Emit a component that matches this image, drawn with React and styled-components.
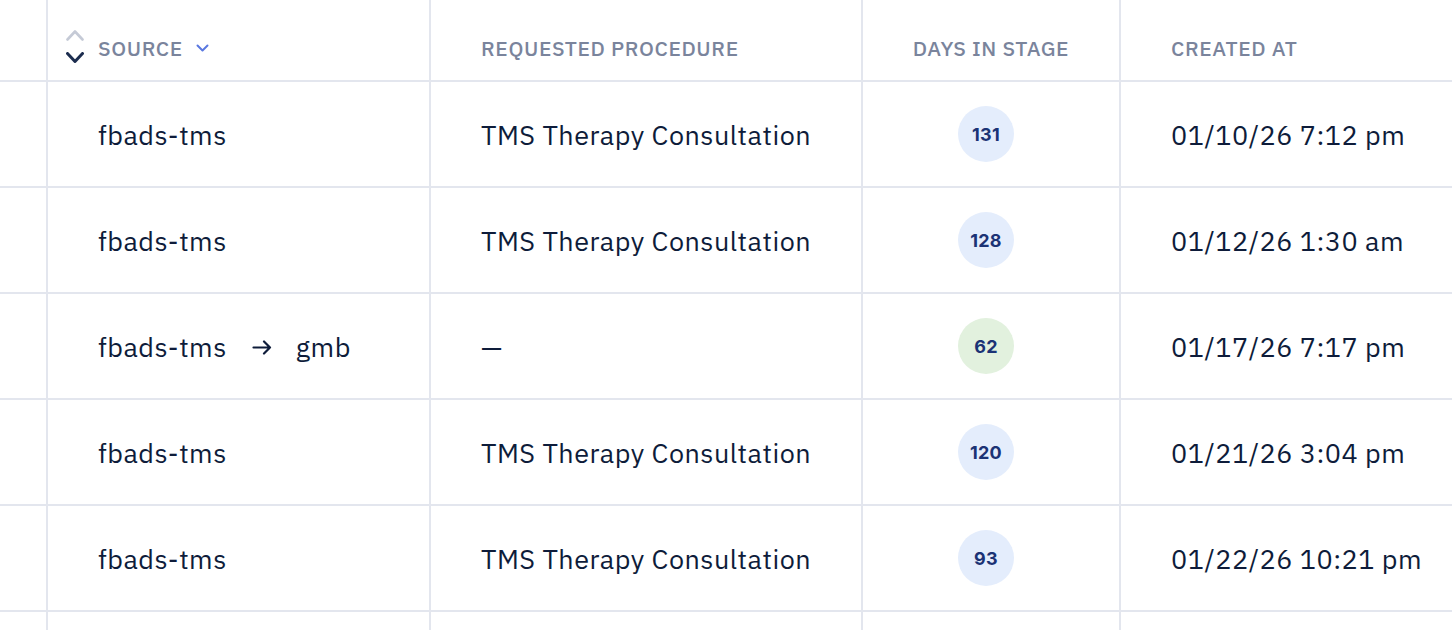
import React from "react";
import styled, { createGlobalStyle } from "styled-components";

const Global = createGlobalStyle`
  html, body { margin: 0; padding: 0; background: #ffffff; }
  body { font-family: "IBM Plex Sans", "Open Sans", "Noto Sans", sans-serif; overflow: hidden; }
`;

const LINE = "#e3e6ee";

const Table = styled.div`
  display: grid;
  grid-template-columns: 48px 383px 432px 258px 1fr;
  width: 1452px;
`;

const HeadCell = styled.div`
  box-sizing: border-box;
  min-width: 0;
  height: 82px;
  display: flex;
  align-items: center;
  justify-content: ${(p) => (p.$center ? "center" : "flex-start")};
  padding: 16px 0 0 ${(p) => (p.$center || p.$blank ? "0" : "50px")};
  border-right: ${(p) => (p.$last ? "none" : `2px solid ${LINE}`)};
  border-bottom: 2px solid ${LINE};
  font-size: 21px;
  font-weight: 500;
  letter-spacing: 0.6px;
  color: #7a849c;
  text-transform: uppercase;
  white-space: nowrap;
`;

const SortHead = styled(HeadCell)`
  padding-left: 18px;
`;

const SortLabel = styled.span`
  margin: 0 13px 0 14px;
`;

const Cell = styled.div`
  box-sizing: border-box;
  min-width: 0;
  height: ${(p) => (p.$partial ? "40px" : "106px")};
  display: flex;
  align-items: center;
  justify-content: ${(p) => (p.$center ? "center" : "flex-start")};
  padding-left: ${(p) => (p.$center || p.$blank ? "0" : "50px")};
  border-right: ${(p) => (p.$last ? "none" : `2px solid ${LINE}`)};
  border-bottom: 2px solid ${LINE};
  font-size: 27px;
  letter-spacing: 0.5px;
  color: #0e1c3a;
  white-space: nowrap;
`;

const SortIcons = styled.span`
  display: flex;
  flex-direction: column;
  align-items: center;
  gap: 11px;
  margin-top: -4px;
`;

const Arrow = styled.span`
  display: inline-flex;
  margin: 2px 24px 0 25px;
`;

const Badge = styled.span`
  width: 56px;
  height: 56px;
  border-radius: 50%;
  background: ${(p) => (p.$green ? "#e2f1de" : "#e4edfc")};
  color: #1b3375;
  font-size: 18px;
  font-weight: 700;
  display: flex;
  align-items: center;
  justify-content: center;
  margin-right: 10px;
  font-family: "Inter", "Noto Sans", sans-serif;
  letter-spacing: 0.3px;
`;

const Chevron = ({ up, color, width = 18, height = 10, w = 2.4 }) => (
  <svg width={width} height={height} viewBox={`0 0 ${width} ${height}`} fill="none">
    <path
      d={
        up
          ? `M1.5 ${height - 1.5} L${width / 2} 1.5 L${width - 1.5} ${height - 1.5}`
          : `M1.5 1.5 L${width / 2} ${height - 1.5} L${width - 1.5} 1.5`
      }
      stroke={color}
      strokeWidth={w}
      strokeLinecap="round"
      strokeLinejoin="round"
    />
  </svg>
);

const rows = [
  { src: "fbads-tms", proc: "TMS Therapy Consultation", days: 131, date: "01/10/26 7:12 pm" },
  { src: "fbads-tms", proc: "TMS Therapy Consultation", days: 128, date: "01/12/26 1:30 am" },
  { src: "fbads-tms", to: "gmb", proc: "—", days: 62, green: true, date: "01/17/26 7:17 pm" },
  { src: "fbads-tms", proc: "TMS Therapy Consultation", days: 120, date: "01/21/26 3:04 pm" },
  { src: "fbads-tms", proc: "TMS Therapy Consultation", days: 93, date: "01/22/26 10:21 pm" },
];

export default function App() {
  return (
    <>
      <Global />
      <Table>
        <HeadCell $blank />
        <SortHead>
          <SortIcons>
            <Chevron up color="#c5cad6" width={18} height={11} w={2.6} />
            <Chevron color="#1c2d4f" width={18} height={11} w={3} />
          </SortIcons>
          <SortLabel>Source</SortLabel>
          <Chevron color="#5a78e0" width={13} height={8} w={2} />
        </SortHead>
        <HeadCell>Requested Procedure</HeadCell>
        <HeadCell $center>Days in Stage</HeadCell>
        <HeadCell $last>Created At</HeadCell>

        {rows.map((r, i) => (
          <React.Fragment key={i}>
            <Cell $blank />
            <Cell>
              {r.src}
              {r.to && (
                <>
                  <Arrow>
                    <svg width="20" height="15" viewBox="0 0 20 15" fill="none">
                      <path d="M1.5 7.5 H18 M12 1.5 L18 7.5 L12 13.5" stroke="#0e1c3a" strokeWidth="2.2" strokeLinecap="round" strokeLinejoin="round" />
                    </svg>
                  </Arrow>
                  {r.to}
                </>
              )}
            </Cell>
            <Cell>{r.proc}</Cell>
            <Cell $center>
              <Badge $green={r.green}>{r.days}</Badge>
            </Cell>
            <Cell $last>{r.date}</Cell>
          </React.Fragment>
        ))}
        <Cell $partial $blank />
        <Cell $partial />
        <Cell $partial />
        <Cell $partial />
        <Cell $partial $last />
      </Table>
    </>
  );
}
